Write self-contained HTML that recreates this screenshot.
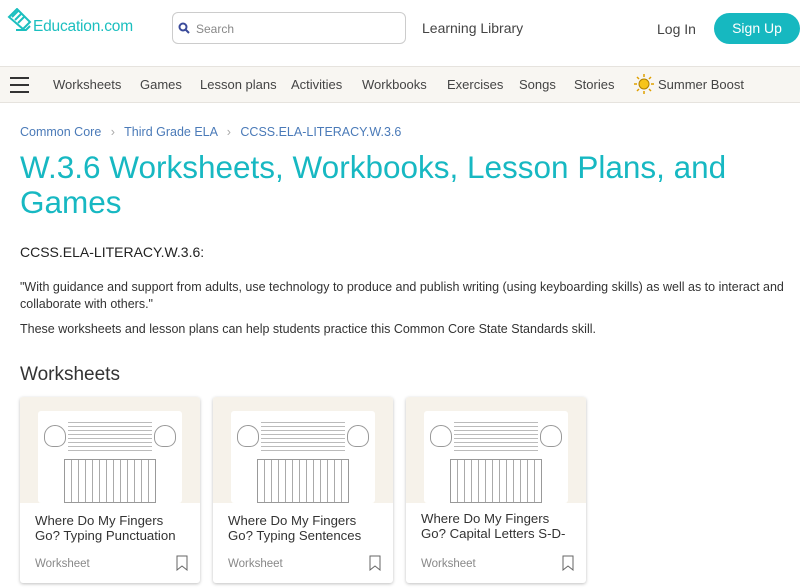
<!DOCTYPE html>
<html><head><meta charset="utf-8"><style>
*{margin:0;padding:0;box-sizing:border-box}
body{width:800px;height:588px;overflow:hidden;background:#fff;font-family:"Liberation Sans",sans-serif;color:#333;position:relative}
.a{position:absolute}
.nav{top:66px;left:0;width:800px;height:37px;background:#f8f6f2;border-top:1px solid #e6e3de;border-bottom:1px solid #e6e3de}
.nav span{position:absolute;top:10px;font-size:13px;color:#444}
.card{width:180px;height:186px;top:397px;background:#fff;box-shadow:0 1px 3px rgba(0,0,0,.25);border-radius:3px;overflow:hidden}
.img{height:106px;background:#f6f2ea;position:relative}
.paper{position:absolute;left:18px;top:14px;width:144px;height:92px;background:#fff;border-radius:3px;overflow:hidden}
.kb{position:absolute;left:26px;top:48px;width:92px;height:44px;border:1px solid #999;background:repeating-linear-gradient(90deg,#fff 0 6px,#aaa 6px 7px),#fff}
.hand{position:absolute;top:14px;width:22px;height:22px;border:1px solid #999;border-radius:50% 50% 40% 40%}
.lines{position:absolute;left:30px;top:8px;width:84px;height:34px;background:repeating-linear-gradient(#fff 0 3px,#bbb 3px 4px)}
.t{position:absolute;left:15px;top:117px;font-size:13.2px;line-height:14.5px;color:#333;width:152px}
.w{position:absolute;left:15px;top:161px;font-size:11.5px;color:#888}
.bm{position:absolute;right:12px;top:158px}
</style></head><body>
<svg class="a" style="left:6px;top:8px" width="26" height="26" viewBox="0 0 26 26" fill="none" stroke="#1bbfbf" stroke-width="2"><path d="M3 9 L11 1 L24 14 L17 21 Z M6 9 L12 3 M9 12 L15 6 M12 15 L18 9 M10 22 L20 22 L24 18"/></svg>
<div class="a" style="left:33px;top:18px;font-size:15.5px;color:#1bbfbf;letter-spacing:-.2px">Education.com</div>
<div class="a" style="left:172px;top:12px;width:234px;height:32px;border:1px solid #ccc;border-radius:6px"></div>
<svg class="a" style="left:178px;top:22px" width="12" height="12" viewBox="0 0 12 12"><circle cx="5" cy="5" r="3.5" fill="none" stroke="#3a4a9a" stroke-width="2"/><path d="M7.5 7.5L11 11" stroke="#3a4a9a" stroke-width="2"/></svg>
<div class="a" style="left:196px;top:22px;font-size:12px;color:#888">Search</div>
<div class="a" style="left:422px;top:20px;font-size:14px;color:#444">Learning Library</div>
<div class="a" style="left:657px;top:21px;font-size:14px;color:#444">Log In</div>
<div class="a" style="left:714px;top:13px;width:86px;height:31px;border-radius:16px;background:#16b8c0;color:#fff;font-size:14px;text-align:center;line-height:31px">Sign Up</div>
<div class="a nav">
<div class="a" style="left:10px;top:10px;width:19px;height:2px;background:#333;box-shadow:0 7px 0 #333,0 14px 0 #333"></div>
<span style="left:53px">Worksheets</span><span style="left:140px">Games</span><span style="left:200px">Lesson plans</span><span style="left:291px">Activities</span><span style="left:362px">Workbooks</span><span style="left:447px">Exercises</span><span style="left:519px">Songs</span><span style="left:574px">Stories</span>
<svg style="position:absolute;left:634px;top:7px" width="20" height="20" viewBox="0 0 20 20"><circle cx="10" cy="10" r="5" fill="#f7c41a" stroke="#b08000"/><g stroke="#e0a000" stroke-width="1.5"><path d="M10 0v3M10 17v3M0 10h3M17 10h3M3 3l2 2M15 15l2 2M3 17l2-2M15 5l2-2"/></g></svg>
<span style="left:658px">Summer Boost</span>
</div>
<div class="a" style="top:125px;left:20px;font-size:12.5px;color:#4a7ab8">Common Core <span style="color:#aaa;margin:0 6px">›</span> Third Grade ELA <span style="color:#aaa;margin:0 6px">›</span> CCSS.ELA-LITERACY.W.3.6</div>
<div class="a" style="top:150px;left:20px;font-size:31.5px;line-height:35px;color:#17b8c2;width:770px">W.3.6 Worksheets, Workbooks, Lesson Plans, and Games</div>
<div class="a" style="top:244px;left:20px;font-size:14px;color:#222">CCSS.ELA-LITERACY.W.3.6:</div>
<div class="a" style="top:279px;left:20px;font-size:12.5px;line-height:17px;color:#333;width:770px">"With guidance and support from adults, use technology to produce and publish writing (using keyboarding skills) as well as to interact and collaborate with others."</div>
<div class="a" style="top:322px;left:20px;font-size:12.5px;color:#333">These worksheets and lesson plans can help students practice this Common Core State Standards skill.</div>
<div class="a" style="top:364px;left:20px;font-size:19px;color:#333">Worksheets</div>
<div class="a card" style="left:20px"><div class="img"><div class="paper"><div class="hand" style="left:6px"></div><div class="hand" style="right:6px"></div><div class="lines"></div><div class="kb"></div></div></div><div class="t">Where Do My Fingers<br>Go? Typing Punctuation</div><div class="w">Worksheet</div><svg class="bm" width="12" height="16"><path d="M1 1h10v14l-5-4-5 4z" fill="none" stroke="#666"/></svg></div>
<div class="a card" style="left:213px"><div class="img"><div class="paper"><div class="hand" style="left:6px"></div><div class="hand" style="right:6px"></div><div class="lines"></div><div class="kb"></div></div></div><div class="t">Where Do My Fingers<br>Go? Typing Sentences</div><div class="w">Worksheet</div><svg class="bm" width="12" height="16"><path d="M1 1h10v14l-5-4-5 4z" fill="none" stroke="#666"/></svg></div>
<div class="a card" style="left:406px"><div class="img"><div class="paper"><div class="hand" style="left:6px"></div><div class="hand" style="right:6px"></div><div class="lines"></div><div class="kb"></div></div></div><div class="t" style="top:115px">Where Do My Fingers<br>Go? Capital Letters S-D-</div><div class="w">Worksheet</div><svg class="bm" width="12" height="16"><path d="M1 1h10v14l-5-4-5 4z" fill="none" stroke="#666"/></svg></div>
</body></html>
